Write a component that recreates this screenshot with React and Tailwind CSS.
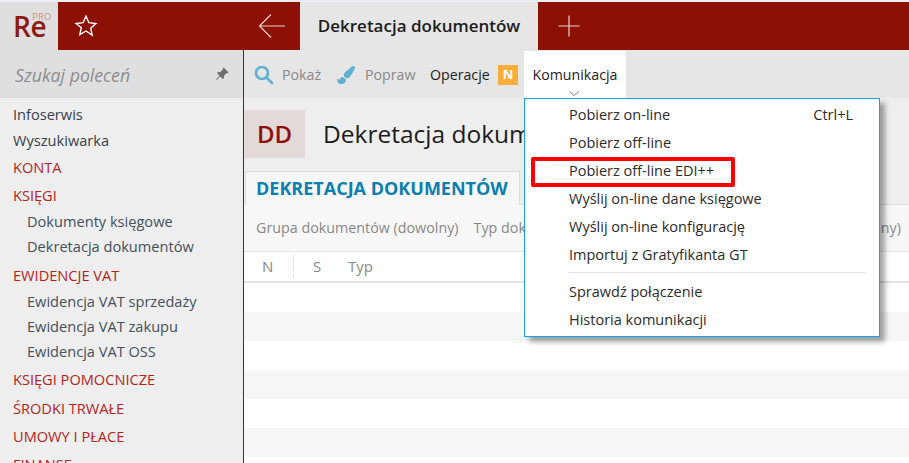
import React from "react";
import { BsPinAngleFill } from "react-icons/bs";
import { FaPaintBrush } from "react-icons/fa";

const side = [
  ["Infoserwis", "i", 26], ["Wyszukiwarka", "i", 26], ["KONTA", "h", 28], ["KSIĘGI", "h", 27],
  ["Dokumenty księgowe", "s", 25], ["Dekretacja dokumentów", "s", 26], ["EWIDENCJE VAT", "h", 29],
  ["Ewidencja VAT sprzedaży", "s", 25], ["Ewidencja VAT zakupu", "s", 25], ["Ewidencja VAT OSS", "s", 26],
  ["KSIĘGI POMOCNICZE", "h", 30], ["ŚRODKI TRWAŁE", "h", 28], ["UMOWY I PŁACE", "h", 28], ["FINANSE", "h", 28],
];

const menuA = ["Pobierz on-line", "Pobierz off-line", "Pobierz off-line EDI++", "Wyślij on-line dane księgowe", "Wyślij on-line konfigurację", "Importuj z Gratyfikanta GT"];
const menuB = ["Sprawdź połączenie", "Historia komunikacji"];

function MenuRow({ label, hint }) {
  return (
    <div className="flex h-[28px] items-center justify-between pl-[44px] pr-[26px] leading-none">
      <span>{label}</span>
      {hint && <span>{hint}</span>}
    </div>
  );
}

export default function App() {
  return (
    <div className="relative flex h-[463px] w-[909px] flex-col overflow-hidden bg-white font-['Open_Sans',sans-serif] text-[14.6px] text-[#333]">
      <div className="h-[2px] shrink-0 bg-[#e9eff5]" />
      <header className="flex h-[48px] shrink-0 items-stretch bg-[#8c1104]">
        <div className="relative w-[58px] bg-[#dfdfdf] pl-[13px] pt-[13px] text-[28px] font-semibold leading-[22px] tracking-[-0.5px] text-[#8c1a10]">
          Re
          <span className="absolute left-[32px] top-[11px] text-[9.5px] font-normal leading-[8px] tracking-[0.2px] text-[#cf9690]">PRO</span>
        </div>
        <div className="flex w-[56px] items-center justify-center">
          <svg width="24" height="24" viewBox="0 0 24 24" fill="none" stroke="#fff" strokeWidth="1.4" strokeLinejoin="miter">
            <path d="M12 2.2l2.9 6.5 7 .8-5.2 4.7 1.5 6.9L12 17l-6.2 3.6 1.5-6.9L2.100 9.500l7-.8z" />
          </svg>
        </div>
        <div className="flex w-[186px] items-center justify-end pr-[14px]">
          <svg width="28" height="26" viewBox="0 0 28 26" fill="none" stroke="#e8cfcc" strokeWidth="1.2">
            <path d="M27 13H1.500M13 1.500L1.500 13 13 24.500" />
          </svg>
        </div>
        <div className="flex w-[238px] items-center justify-center bg-[#e6e6e6] text-[17px] font-semibold text-[#1c1c1c]">
          Dekretacja dokumentów
        </div>
        <div className="flex w-[62px] items-center justify-center">
          <svg width="22" height="22" viewBox="0 0 22 22" fill="none" stroke="#e8cfcc" strokeWidth="1.2">
            <path d="M11 0.500V21.500M0.500 11H21.500" />
          </svg>
        </div>
      </header>

      <div className="flex min-h-0 flex-1">
        <aside className="flex w-[244px] shrink-0 flex-col border-r border-[#8c1104] bg-[#eeeeee]">
          <div className="flex h-[48px] shrink-0 items-center justify-between bg-[#dfdfdf] pl-[15px] pr-[14px] pt-[3px]">
            <span className="text-[17.7px] italic text-[#8e8e8e]">Szukaj poleceń</span>
            <BsPinAngleFill className="mb-[3px] h-[14px] w-[14px] text-[#707070]" />
          </div>
          <nav className="pt-[4px]">
            {side.map(([t, k, h], i) => (
              <div
                key={t}
                style={{ height: h, marginTop: t === "EWIDENCJE VAT" ? 1 : 0, marginBottom: t === "EWIDENCJE VAT" ? -1 : 0 }}
                className={
                  "flex items-center whitespace-nowrap " +
                  (k === "h" ? "pl-[13px] text-[#b5251c]" : k === "s" ? "pl-[27px] text-[#44505c]" : "pl-[13px] text-[#37424d]")
                }
              >
                {t}
              </div>
            ))}
          </nav>
        </aside>

        <main className="flex min-w-0 flex-1 flex-col">
          <div className="flex h-[48px] shrink-0 items-center bg-[#e6e6e6] pl-[10px] pt-[1px] text-[14.2px]">
            <svg width="20" height="20" viewBox="0 0 20 20" fill="none" stroke="#62b0d2" strokeWidth="2.600">
              <circle cx="8" cy="8" r="6" />
              <path d="M12.500 12.500L18 18" strokeLinecap="round" />
            </svg>
            <span className="ml-[8px] w-[38px] whitespace-nowrap text-[#888]">Pokaż</span>
            <FaPaintBrush className="ml-[17px] h-[18px] w-[18px] shrink-0 text-[#62b0d2]" />
            <span className="ml-[10px] w-[50px] whitespace-nowrap text-[#888]">Popraw</span>
            <span className="ml-[15px] w-[60px] whitespace-nowrap text-[#1c1c1c]">Operacje</span>
            <span className="ml-[8px] flex h-[20px] w-[20px] shrink-0 items-center justify-center bg-[#f9ae3c] text-[13px] font-bold text-white">N</span>
            <div className="relative ml-[6px] flex h-full w-[102px] shrink-0 items-center justify-center bg-white text-[#1c1c1c]">
              Komunikacja
              <svg className="absolute bottom-[2px] left-[45px]" width="10" height="5" viewBox="0 0 10 5" fill="none" stroke="#777" strokeWidth="1">
                <path d="M0.500 0.500L5 4.500 9.500 0.500" />
              </svg>
            </div>
          </div>

          <div className="flex h-[73px] shrink-0 items-start bg-[#eeeeee] pt-[12px]">
            <div className="flex h-[48px] w-[61px] items-center justify-center bg-[#e3d9d8] text-[24px] font-semibold text-[#8c1104]">DD</div>
            <div className="ml-[18px] whitespace-nowrap text-[24.5px] leading-[47px] text-[#1c1c1c]">Dekretacja dokumentów</div>
          </div>

          <div className="flex h-[34px] shrink-0 items-end bg-[#eeeeee] pl-[1px]">
            <div className="flex h-[34px] w-[275px] items-center whitespace-nowrap border-x border-t border-[#dcdcdc] bg-[#f7f7f7] pl-[10px] text-[18px] font-bold text-[#0c7fae]">
              DEKRETACJA DOKUMENTÓW
            </div>
            <div className="h-px flex-1 bg-[#dcdcdc]" />
          </div>

          <div className="flex h-[47px] shrink-0 items-center gap-[15px] whitespace-nowrap border-b border-[#e6e6e6] bg-[#f7f7f7] pl-[12px] pr-[8px] text-[14.3px] text-[#888]">
            <span>Grupa dokumentów (dowolny)</span>
            <span>Typ dokumentu (dowolny)</span>
            <span className="ml-auto">Status (dowolny)</span>
          </div>

          <div className="flex h-[31px] shrink-0 items-center border-b-2 border-[#e2e2e2] bg-white text-[15px] text-[#888]">
            <span className="w-[50px] border-r border-dotted border-[#dddddd] pl-[18px]">N</span>
            <span className="w-[54px] pl-[19px]">S</span>
            <span>Typ</span>
          </div>

          <div className="h-[29px] shrink-0 bg-white" />
          <div className="h-[29px] shrink-0 bg-[#f6f6f6]" />
          <div className="h-[29px] shrink-0 bg-white" />
          <div className="h-[29px] shrink-0 bg-[#f6f6f6]" />
          <div className="h-[29px] shrink-0 bg-white" />
          <div className="h-[29px] shrink-0 bg-[#f6f6f6]" />
        </main>
      </div>

      <div className="absolute left-[524px] top-[98px] w-[356px] border border-[#17a2e2] bg-white py-[2px] text-[14.5px] text-[#2b2b2b] shadow-[5px_5px_5px_rgba(0,0,0,0.35)]">
        {menuA.map((t, i) => (
          <MenuRow key={t} label={t} hint={i === 0 ? "Ctrl+L" : null} />
        ))}
        <div className="ml-[44px] mr-[13px] mb-[5px] mt-[3px] h-px bg-[#e2e2e2]" />
        {menuB.map((t) => (
          <MenuRow key={t} label={t} />
        ))}
      </div>

      <div className="absolute left-[531px] top-[157px] h-[30px] w-[204px] rounded-[2px] border-[4px] border-[#ff0000]" />
    </div>
  );
}
